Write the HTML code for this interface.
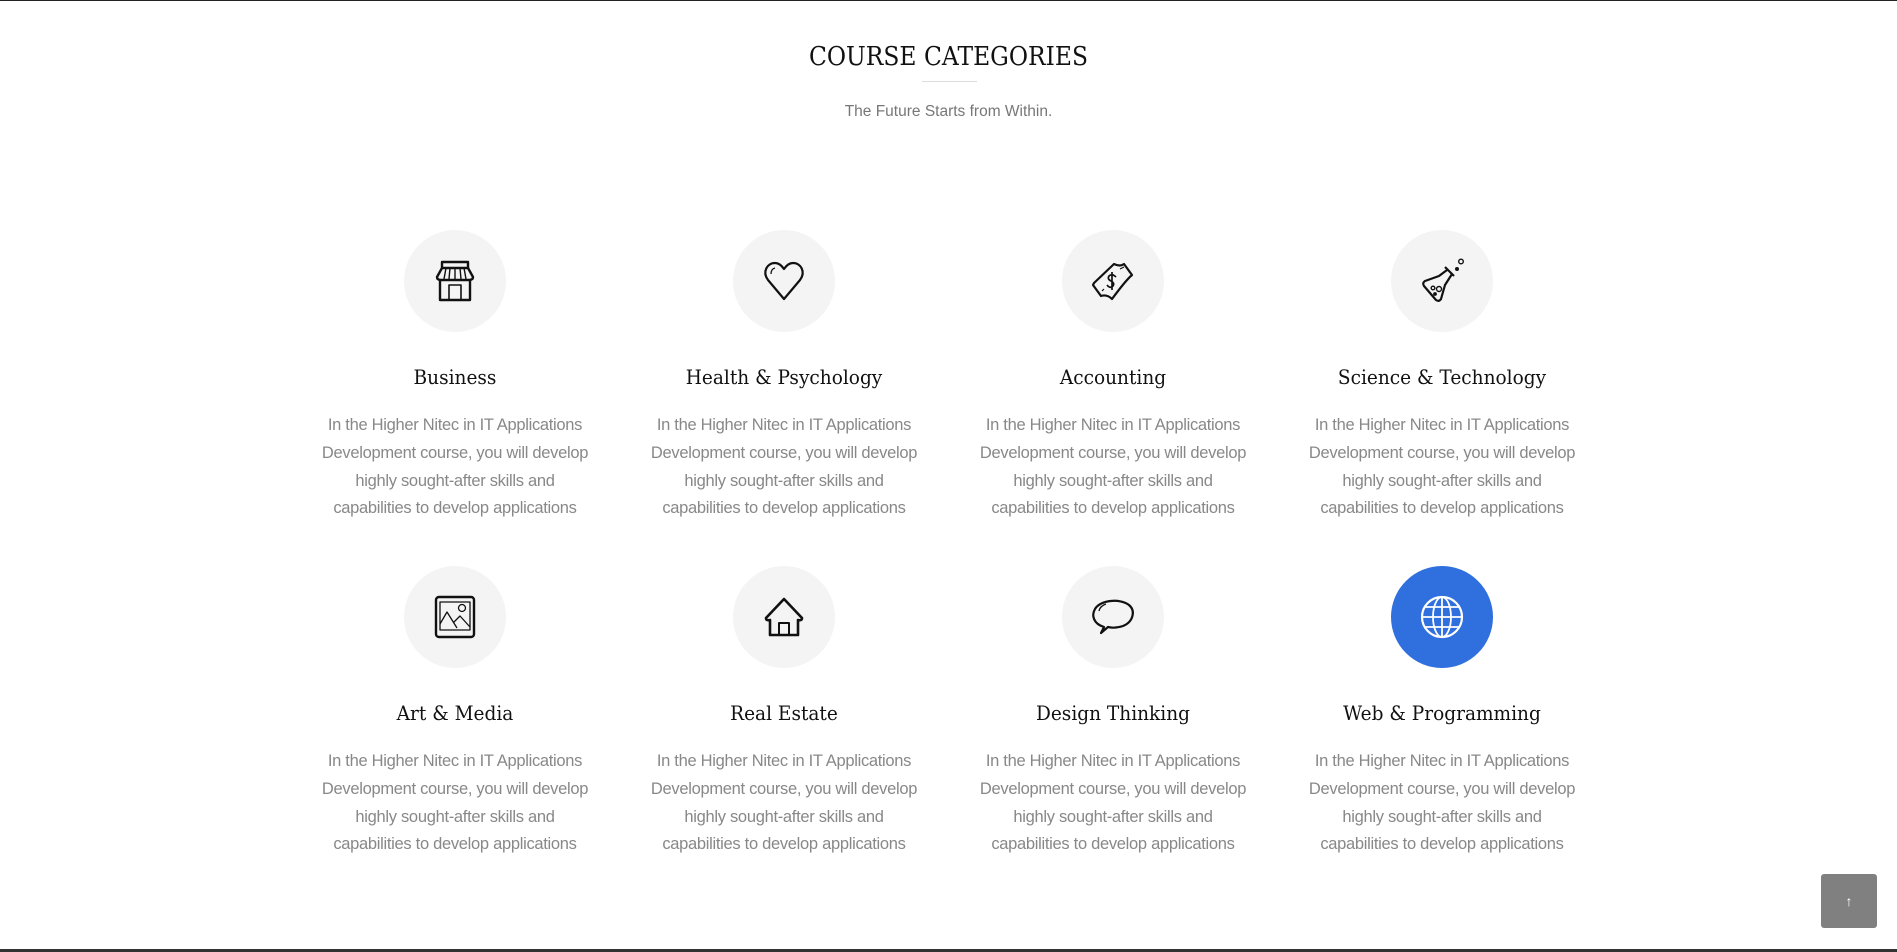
<!DOCTYPE html>
<html><head><meta charset="utf-8"><style>
*{margin:0;padding:0;box-sizing:border-box}
html,body{width:1897px;height:952px;overflow:hidden;background:#fff}
body{position:relative;font-family:"Liberation Sans",sans-serif}
.topline{position:absolute;left:0;top:0;width:1897px;height:1px;background:#222}
.botline{position:absolute;left:0;bottom:0;width:1897px;height:3px;background:#333}
h1{position:absolute;left:0;width:1897px;top:42px;text-align:center;font-family:"DejaVu Serif","Liberation Serif",serif;font-weight:normal;font-size:26px;letter-spacing:0px;color:#111;transform:scaleX(0.9)}
.ul{position:absolute;left:922px;top:81px;width:55px;height:1px;background:#ddd}
.sub{position:absolute;left:0;width:1897px;top:103px;text-align:center;font-size:15.5px;color:#777}
.item{position:absolute;width:300px;text-align:center}
.circ{position:absolute;left:99px;top:0;width:102px;height:102px;border-radius:50%;background:#f4f4f4;display:flex;align-items:center;justify-content:center}
.circ.blue{background:#2f6fde}
.t{position:absolute;left:0;top:136px;width:300px;font-family:"DejaVu Serif","Liberation Serif",serif;font-size:19.5px;color:#111;transform:scaleX(0.95)}
.d{position:absolute;left:10px;top:182px;width:280px;font-size:16.5px;line-height:27.8px;color:#888;letter-spacing:-0.3px}
.btn{position:absolute;left:1821px;top:874px;width:56px;height:54px;background:#808080;border-radius:3px;color:#fff;font-size:14px;display:flex;align-items:center;justify-content:center;font-weight:bold}
</style></head><body>
<div class="topline"></div>
<h1>COURSE CATEGORIES</h1>
<div class="ul"></div>
<div class="sub">The Future Starts from Within.</div>

<div class="item" style="left:305px;top:230px">
<div class="circ"><svg width="46" height="46" viewBox="0 0 46 46" fill="none" stroke="#111" stroke-width="2.4" stroke-linejoin="round"><rect x="10" y="4" width="26" height="6"/><path d="M10 10 L5 19 Q5 22 9 22 L37 22 Q41 22 41 19 L36 10"/><path d="M14 10 L12 21 M18 10 L17 21 M23 10 V21 M28 10 L29 21 M32 10 L34 21" stroke-width="1.4"/><path d="M8 22 V42 H38 V22"/><rect x="17" y="27" width="12" height="15" stroke-width="1.6"/></svg></div>
<div class="t">Business</div>
<div class="d">In the Higher Nitec in IT Applications Development course, you will develop highly sought-after skills and capabilities to develop applications</div>
</div>
<div class="item" style="left:634px;top:230px">
<div class="circ"><svg width="46" height="46" viewBox="0 0 46 46" fill="none" stroke="#111" stroke-width="2.2" stroke-linejoin="round"><path d="M23 41 L7 22 C1 14 6 5 14 5 C18 5 21 8 23 11 C25 8 28 5 32 5 C40 5 45 14 39 22 Z"/><path d="M10 16 Q10 11 14 10" stroke-width="1.3"/></svg></div>
<div class="t">Health &amp; Psychology</div>
<div class="d">In the Higher Nitec in IT Applications Development course, you will develop highly sought-after skills and capabilities to develop applications</div>
</div>
<div class="item" style="left:963px;top:230px">
<div class="circ"><svg width="46" height="46" viewBox="0 0 46 46" fill="none" stroke="#111" stroke-width="2.2" stroke-linejoin="round"><path d="M4 25 L24 6 Q30 9 34 6 L42 17 Q36 22 22 41 Q17 36 11 38 L3 27 Z"/><path d="M26 19 Q22 15 19 18 Q17 21 21 23 Q25 25 23 28 Q20 31 17 27 M22 14 V32" stroke-width="1.7"/><path d="M30 11 L34 9 M12 33 L14 31" stroke-width="1.2"/></svg></div>
<div class="t">Accounting</div>
<div class="d">In the Higher Nitec in IT Applications Development course, you will develop highly sought-after skills and capabilities to develop applications</div>
</div>
<div class="item" style="left:1292px;top:230px">
<div class="circ"><svg width="46" height="46" viewBox="0 0 46 46" fill="none" stroke="#111" stroke-width="2.2" stroke-linejoin="round"><path d="M26 9 L35 18 M28 12 L20 18 L6 23 Q3 25 5 28 L17 42 Q20 44 22 41 L26 27 L33 16"/><circle cx="14" cy="30" r="1.8" stroke-width="1.4"/><circle cx="20" cy="31" r="2.5" stroke-width="1.4"/><circle cx="16" cy="36" r="0.8" fill="#111"/><circle cx="42" cy="3.5" r="2.3" stroke-width="1.4"/><circle cx="38" cy="11" r="0.9" fill="#111"/></svg></div>
<div class="t">Science &amp; Technology</div>
<div class="d">In the Higher Nitec in IT Applications Development course, you will develop highly sought-after skills and capabilities to develop applications</div>
</div>

<div class="item" style="left:305px;top:566px">
<div class="circ"><svg width="46" height="46" viewBox="0 0 46 46" fill="none" stroke="#111" stroke-width="2.4" stroke-linejoin="round"><rect x="4" y="3" width="38" height="40" rx="3"/><rect x="8" y="8" width="30" height="28" stroke-width="1.3"/><path d="M8 30 L15 18 L25 34 M22 28 L28 22 L38 33" stroke-width="1.3"/><circle cx="30" cy="14" r="3.5" stroke-width="1.3"/></svg></div>
<div class="t">Art &amp; Media</div>
<div class="d">In the Higher Nitec in IT Applications Development course, you will develop highly sought-after skills and capabilities to develop applications</div>
</div>
<div class="item" style="left:634px;top:566px">
<div class="circ"><svg width="46" height="46" viewBox="0 0 46 46" fill="none" stroke="#111" stroke-width="2.6" stroke-linejoin="round"><path d="M23 5 L5 24 Q5 27 9 26 L9 41 H37 L37 26 Q41 27 41 24 Z"/><rect x="18" y="29" width="10" height="12" stroke-width="2"/></svg></div>
<div class="t">Real Estate</div>
<div class="d">In the Higher Nitec in IT Applications Development course, you will develop highly sought-after skills and capabilities to develop applications</div>
</div>
<div class="item" style="left:963px;top:566px">
<div class="circ"><svg width="46" height="46" viewBox="0 0 46 46" fill="none" stroke="#111" stroke-width="2.2" stroke-linejoin="round"><path d="M14 33 C4 30 1 22 5 15 C10 6 30 4 39 11 C46 17 43 28 33 32 C27 34 22 34 18 33 L11 39 Z"/><path d="M9 17 Q10 12 16 10" stroke-width="1.3"/></svg></div>
<div class="t">Design Thinking</div>
<div class="d">In the Higher Nitec in IT Applications Development course, you will develop highly sought-after skills and capabilities to develop applications</div>
</div>
<div class="item" style="left:1292px;top:566px">
<div class="circ blue"><svg width="46" height="46" viewBox="0 0 46 46" fill="none" stroke="#fff" stroke-width="2.2"><circle cx="23" cy="23" r="20"/><ellipse cx="23" cy="23" rx="9" ry="20" stroke-width="1.8"/><path d="M23 3 V43 M3 23 H43 M6 13 H40 M6 33 H40" stroke-width="1.8"/></svg></div>
<div class="t">Web &amp; Programming</div>
<div class="d">In the Higher Nitec in IT Applications Development course, you will develop highly sought-after skills and capabilities to develop applications</div>
</div>

<div class="btn">↑</div>
<div class="botline"></div>
</body></html>
